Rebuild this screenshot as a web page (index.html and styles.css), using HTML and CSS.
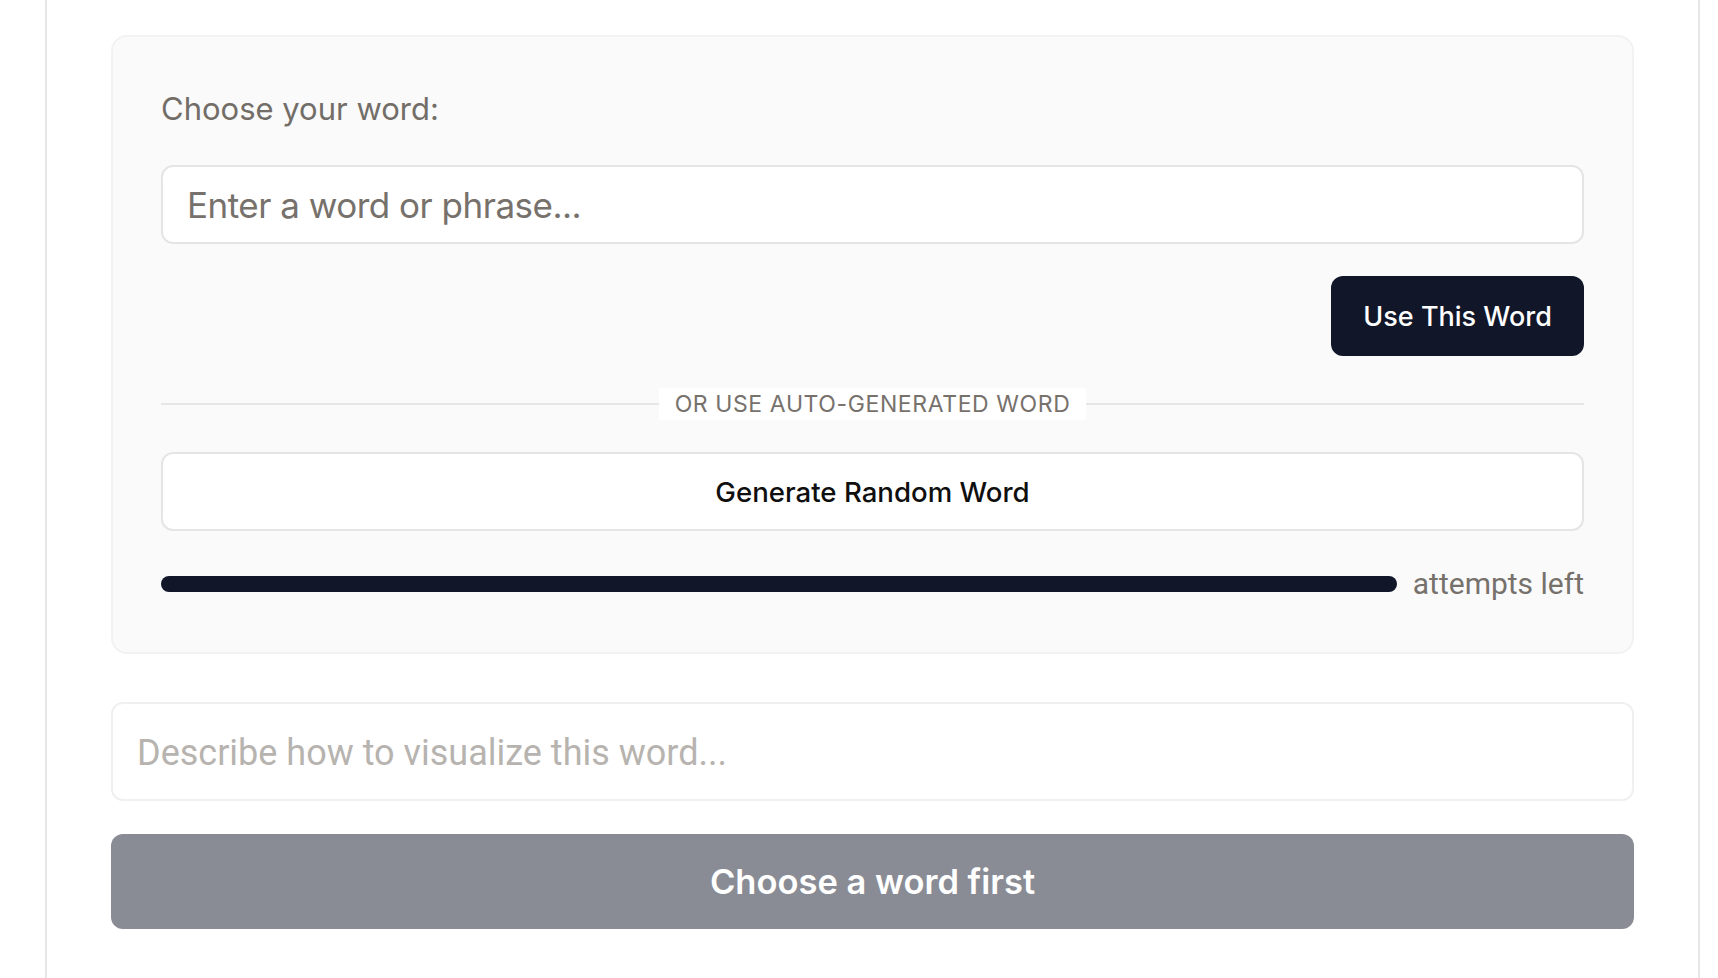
FILE: index.html
```html
<!DOCTYPE html>
<html>
<head>
<meta charset="utf-8">
<link rel="stylesheet" href="styles.css">
</head>
<body>
<div class="frame">
  <div class="card">
    <label class="label" for="word">Choose your word:</label>
    <input id="word" class="word-input" type="text" placeholder="Enter a word or phrase...">
    <div class="actions">
      <button class="btn-dark">Use This Word</button>
    </div>
    <div class="divider">
      <span class="divider-line"></span>
      <span class="divider-text">OR USE AUTO-GENERATED WORD</span>
      <span class="divider-line"></span>
    </div>
    <button class="btn-outline">Generate Random Word</button>
    <div class="progress-row">
      <div class="progress-bar"></div>
      <span class="attempts">attempts left</span>
    </div>
  </div>
  <textarea class="describe" rows="1" placeholder="Describe how to visualize this word..."></textarea>
  <button class="btn-submit" disabled>Choose a word first</button>
</div>
</body>
</html>
```

FILE: styles.css
```css
html, body {
  margin: 0;
  padding: 0;
  background: #ffffff;
  height: 100%;
}
body {
  font-family: Inter, "Noto Sans", sans-serif;
  overflow: hidden;
}
.frame {
  box-sizing: border-box;
  margin-left: 45px;
  margin-right: 18px;
  min-height: 100%;
  border-left: 2px solid #e7e7e7;
  border-right: 2px solid #e7e7e7;
  padding: 35px 64px 0 64px;
  display: flex;
  flex-direction: column;
}
.card {
  background: #fafafa;
  border: 2px solid #f2f2f2;
  border-radius: 16px;
  padding: 48px 48px 48px 48px;
  display: flex;
  flex-direction: column;
}
.label {
  font-size: 31px;
  line-height: 48px;
  color: #736d68;
  margin-bottom: 32px;
}
.word-input {
  box-sizing: border-box;
  height: 79px;
  border: 2px solid #e5e5e5;
  border-radius: 12px;
  background: #fff;
  padding: 0 24px;
  font-family: Inter, "Noto Sans", sans-serif;
  font-size: 35px;
  letter-spacing: -0.5px;
  color: #222;
  outline: none;
}
.word-input::placeholder {
  color: #77716c;
}
.actions {
  display: flex;
  justify-content: flex-end;
  margin-top: 32px;
}
.btn-dark {
  box-sizing: border-box;
  height: 80px;
  padding: 0 32px;
  border: none;
  border-radius: 12px;
  background: #111729;
  color: #fff;
  font-family: Inter, "Noto Sans", sans-serif;
  font-size: 27px;
  font-weight: 500;
}
.divider {
  display: flex;
  align-items: center;
  margin-top: 32px;
  height: 32px;
}
.divider-line {
  flex: 1;
  height: 2px;
  background: #e6e6e6;
}
.divider-text {
  background: #fff;
  padding: 0 16px;
  font-size: 23px;
  line-height: 32px;
  letter-spacing: 0.6px;
  color: #77716c;
}
.btn-outline {
  box-sizing: border-box;
  margin-top: 32px;
  height: 79px;
  border: 2px solid #e5e5e5;
  border-radius: 12px;
  background: #fff;
  color: #0f0f0f;
  font-family: Inter, "Noto Sans", sans-serif;
  font-size: 27.6px;
  font-weight: 500;
}
.progress-row {
  display: flex;
  align-items: center;
  gap: 16px;
  margin-top: 33px;
  height: 40px;
}
.progress-bar {
  flex: 1;
  height: 16px;
  border-radius: 8px;
  background: #111729;
}
.attempts {
  font-family: Roboto, sans-serif;
  font-size: 30px;
  line-height: 40px;
  color: #77716c;
}
.describe {
  box-sizing: border-box;
  margin-top: 48px;
  height: 99px;
  border: 2px solid #f0f0f0;
  border-radius: 12px;
  background: #fff;
  padding: 27px 24px 22px 24px;
  font-family: Roboto, sans-serif;
  font-size: 36px;
  line-height: 45px;
  resize: none;
  outline: none;
  overflow: hidden;
}
.describe::placeholder {
  color: #b7b3af;
}
.btn-submit {
  box-sizing: border-box;
  margin-top: 33px;
  height: 95px;
  border: none;
  border-radius: 12px;
  background: #8a8c95;
  color: #fff;
  font-family: Inter, "Noto Sans", sans-serif;
  font-size: 34.5px;
  font-weight: 600;
}
```
